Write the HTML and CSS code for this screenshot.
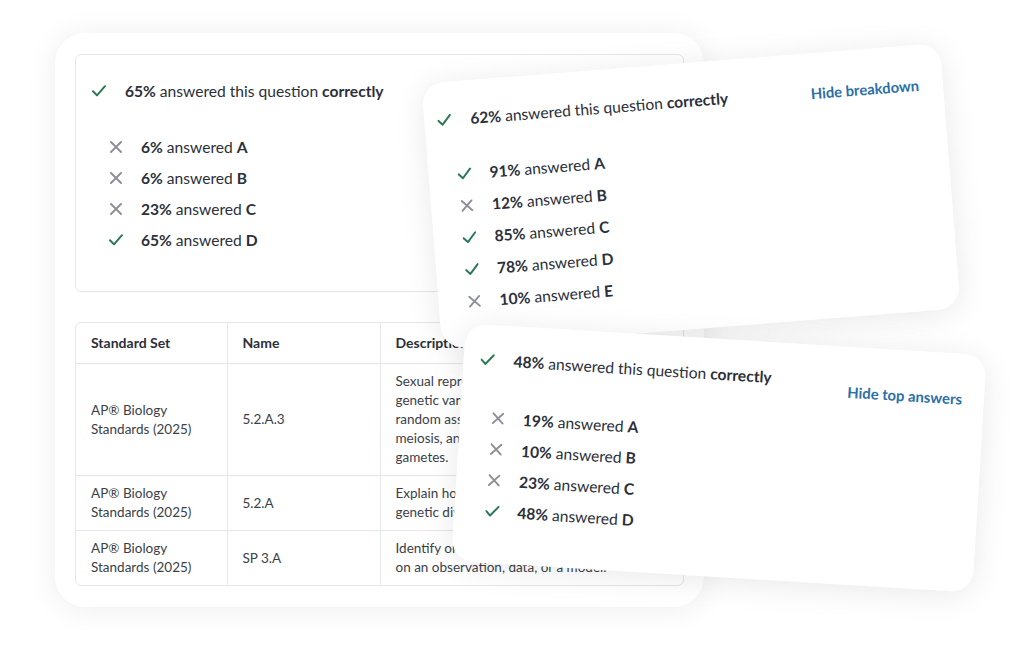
FILE: index.html
```html
<!DOCTYPE html>
<html lang="en">
<head>
<meta charset="utf-8">
<title>Question results</title>
<link rel="stylesheet" href="styles.css">
</head>
<body>
<div class="stage">
  <div class="main-card">
    <div class="answer-box">
      <div class="title-row">
        <svg class="icon-check" viewBox="0 0 14 12"><path d="M1 6.2 L5 10.4 L13 1.2"/></svg>
        <span><b>65%</b> answered this question <b>correctly</b></span>
      </div>
      <ul class="answers">
        <li><svg class="icon-x" viewBox="0 0 12 12"><path d="M1 1 L11 11 M11 1 L1 11"/></svg><span><b>6%</b> answered <b>A</b></span></li>
        <li><svg class="icon-x" viewBox="0 0 12 12"><path d="M1 1 L11 11 M11 1 L1 11"/></svg><span><b>6%</b> answered <b>B</b></span></li>
        <li><svg class="icon-x" viewBox="0 0 12 12"><path d="M1 1 L11 11 M11 1 L1 11"/></svg><span><b>23%</b> answered <b>C</b></span></li>
        <li><svg class="icon-check small" viewBox="0 0 14 12"><path d="M1 6.2 L5 10.4 L13 1.2"/></svg><span><b>65%</b> answered <b>D</b></span></li>
      </ul>
    </div>
    <div class="table-wrap">
      <table class="standards">
        <thead>
          <tr><th class="col-set">Standard Set</th><th class="col-name">Name</th><th class="col-desc">Description</th></tr>
        </thead>
        <tbody>
          <tr>
            <td>AP® Biology<br>Standards (2025)</td>
            <td>5.2.A.3</td>
            <td>Sexual reproduction results in increased<br>genetic variation through crossing over, the<br>random assortment of chromosomes during<br>meiosis, and the random fusion of haploid<br>gametes.</td>
          </tr>
          <tr>
            <td>AP® Biology<br>Standards (2025)</td>
            <td>5.2.A</td>
            <td>Explain how meiosis and fertilization lead to<br>genetic diversity in sexually reproducing species.</td>
          </tr>
          <tr>
            <td>AP® Biology<br>Standards (2025)</td>
            <td>SP 3.A</td>
            <td>Identify or describe a pattern or trend based<br>on an observation, data, or a model.</td>
          </tr>
        </tbody>
      </table>
    </div>
  </div>

  <div class="pop pop-breakdown">
    <div class="pop-head">
      <div class="title-row">
        <svg class="icon-check" viewBox="0 0 14 12"><path d="M1 6.2 L5 10.4 L13 1.2"/></svg>
        <span><b>62%</b> answered this question <b>correctly</b></span>
      </div>
      <a class="link link-breakdown">Hide breakdown</a>
    </div>
    <ul class="answers">
      <li><svg class="icon-check small" viewBox="0 0 14 12"><path d="M1 6.2 L5 10.4 L13 1.2"/></svg><span><b>91%</b> answered <b>A</b></span></li>
      <li><svg class="icon-x" viewBox="0 0 12 12"><path d="M1 1 L11 11 M11 1 L1 11"/></svg><span><b>12%</b> answered <b>B</b></span></li>
      <li><svg class="icon-check small" viewBox="0 0 14 12"><path d="M1 6.2 L5 10.4 L13 1.2"/></svg><span><b>85%</b> answered <b>C</b></span></li>
      <li><svg class="icon-check small" viewBox="0 0 14 12"><path d="M1 6.2 L5 10.4 L13 1.2"/></svg><span><b>78%</b> answered <b>D</b></span></li>
      <li><svg class="icon-x" viewBox="0 0 12 12"><path d="M1 1 L11 11 M11 1 L1 11"/></svg><span><b>10%</b> answered <b>E</b></span></li>
    </ul>
  </div>

  <div class="pop pop-top">
    <div class="pop-head">
      <div class="title-row">
        <svg class="icon-check" viewBox="0 0 14 12"><path d="M1 6.2 L5 10.4 L13 1.2"/></svg>
        <span><b>48%</b> answered this question <b>correctly</b></span>
      </div>
      <a class="link link-low">Hide top answers</a>
    </div>
    <ul class="answers">
      <li><svg class="icon-x" viewBox="0 0 12 12"><path d="M1 1 L11 11 M11 1 L1 11"/></svg><span><b>19%</b> answered <b>A</b></span></li>
      <li><svg class="icon-x" viewBox="0 0 12 12"><path d="M1 1 L11 11 M11 1 L1 11"/></svg><span><b>10%</b> answered <b>B</b></span></li>
      <li><svg class="icon-x" viewBox="0 0 12 12"><path d="M1 1 L11 11 M11 1 L1 11"/></svg><span><b>23%</b> answered <b>C</b></span></li>
      <li><svg class="icon-check small" viewBox="0 0 14 12"><path d="M1 6.2 L5 10.4 L13 1.2"/></svg><span><b>48%</b> answered <b>D</b></span></li>
    </ul>
  </div>
</div>
</body>
</html>
```

FILE: styles.css
```css
* { box-sizing: border-box; }

html, body {
  margin: 0;
  padding: 0;
  background: #ffffff;
}

body {
  width: 1020px;
  height: 650px;
  overflow: hidden;
  font-family: Lato, "Open Sans", Arial, sans-serif;
  color: #2b303a;
}

.stage {
  position: relative;
  width: 1020px;
  height: 650px;
  padding: 33px 0 0 55px;
}

b { font-weight: 700; }

/* Main card */
.main-card {
  width: 649px;
  height: 574px;
  background: #fff;
  border-radius: 30px;
  padding: 21px 20px 22px 20px;
  box-shadow: 0 2px 30px rgba(0, 0, 0, 0.075);
}

.answer-box {
  border: 1px solid #e4e6e9;
  border-radius: 6px;
  height: 238px;
  padding: 26px 16px 0 16px;
}

.title-row {
  display: flex;
  align-items: center;
  gap: 19px;
  font-size: 15.6px;
  line-height: 20px;
  white-space: nowrap;
}

.icon-check {
  width: 14px;
  height: 12px;
  flex: none;
}
.icon-check path {
  fill: none;
  stroke: #2a7a57;
  stroke-width: 2;
  stroke-linecap: round;
  stroke-linejoin: round;
}

.icon-x {
  width: 12px;
  height: 12px;
  flex: none;
  margin-left: 1px;
  margin-right: 1px;
}
.icon-x path {
  fill: none;
  stroke: #8c8f95;
  stroke-width: 1.9;
  stroke-linecap: round;
}

.answers {
  list-style: none;
  margin: 30px 0 0 0;
  padding: 0 0 0 17px;
}

.answers li {
  display: flex;
  align-items: center;
  gap: 18px;
  height: 31px;
  font-size: 15.6px;
  white-space: nowrap;
}

/* Table */
.table-wrap {
  margin-top: 30px;
  border: 1px solid #e4e6e9;
  border-radius: 6px;
  overflow: hidden;
}

.standards {
  width: 100%;
  border-collapse: collapse;
  table-layout: fixed;
  font-size: 13.5px;
  line-height: 19px;
  color: #3a3f49;
}

.standards th {
  text-align: left;
  font-weight: 700;
  font-size: 14px;
  color: #2b303a;
  padding: 11px 15px;
  line-height: 18px;
}

.standards td {
  padding: 8px 15px;
  vertical-align: middle;
  border-top: 1px solid #e4e6e9;
  white-space: nowrap;
  overflow: hidden;
}

.standards th + th,
.standards td + td {
  border-left: 1px solid #e4e6e9;
}

.col-set { width: 151px; }
.col-name { width: 153px; }

/* Floating result cards */
.pop {
  position: absolute;
  background: #fff;
  border-radius: 22px;
  box-shadow: 0 4px 32px rgba(0, 0, 0, 0.09);
}

.pop-head {
  display: flex;
  justify-content: space-between;
  align-items: flex-start;
}

.link {
  font-size: 14.8px;
  font-weight: 700;
  color: #2b6fa8;
  line-height: 20px;
  white-space: nowrap;
}

.pop .answers {
  margin-top: 29px;
  padding-left: 16px;
}

.pop-breakdown {
  left: 431px;
  top: 63px;
  width: 520px;
  height: 266px;
  padding: 28px 24px 0 13px;
  transform: rotate(-4.5deg);
}

.pop-breakdown .answers li {
  height: 32px;
}

.link-breakdown {
  margin-top: 2px;
  margin-bottom: -2px;
}

.pop-top {
  left: 458px;
  top: 339px;
  width: 522px;
  height: 238px;
  padding: 25px 22px 0 17px;
  transform: rotate(3.5deg);
}

.pop-top .answers {
  margin-top: 32px;
  padding-left: 14px;
}

.link-low {
  margin-top: 10px;
  margin-bottom: -10px;
}
```
